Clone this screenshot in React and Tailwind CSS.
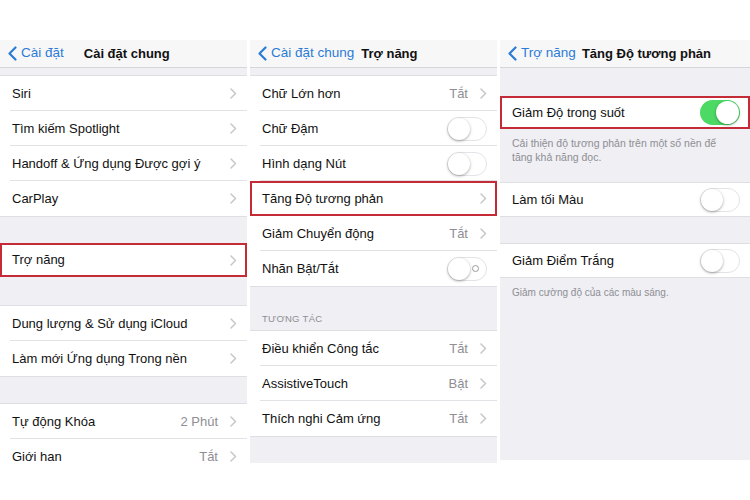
import React from "react";

const font = { fontFamily: '"Liberation Sans", Arial, sans-serif' };

function Chevron() {
  return (
    <svg width="7" height="11" viewBox="0 0 7 11" className="shrink-0">
      <polyline points="1,1 5.5,5.5 1,10" fill="none" stroke="#c7c7cc" strokeWidth="1.5" strokeLinecap="round" strokeLinejoin="round" />
    </svg>
  );
}

function BackChevron() {
  return (
    <svg width="9" height="15" viewBox="0 0 9 15" className="shrink-0">
      <polyline points="7.5,1.5 1.5,7.5 7.5,13.5" fill="none" stroke="#2b7bd6" strokeWidth="2.2" strokeLinecap="round" strokeLinejoin="round" />
    </svg>
  );
}

function Toggle({ on, label }) {
  if (on) {
    return (
      <div className="w-[40px] h-[25px] rounded-full bg-[#4cd964] flex items-center justify-end pr-[1px]">
        <div className="w-[23px] h-[23px] rounded-full bg-white shadow-[0_1px_3px_rgba(0,0,0,0.35)]" />
      </div>
    );
  }
  return (
    <div className="w-[40px] h-[24px] rounded-full bg-white border border-[#e3e3e8] flex items-center justify-between">
      <div className="w-[22px] h-[22px] rounded-full bg-white shadow-[0_1px_3px_rgba(0,0,0,0.35)]" />
      {label ? <div className="w-[7px] h-[7px] rounded-full border border-[#9a9aa0] mr-[7px]" /> : null}
    </div>
  );
}

function Row({ text, value, chevron, toggle, on, label, last, highlight, h = 35 }) {
  return (
    <div className="relative bg-white shrink-0" style={{ height: h }}>
      <div className="flex items-center h-full pl-[12px] pr-[10px]">
        <span className="text-[13px] text-[#111] flex-1 whitespace-nowrap">{text}</span>
        {value ? <span className="text-[13px] text-[#8e8e93] mr-[12px]">{value}</span> : null}
        {chevron ? <Chevron /> : null}
        {toggle ? <Toggle on={on} label={label} /> : null}
      </div>
      {!last ? <div className="absolute bottom-0 left-[10px] right-0 h-px bg-[#e2e2e6]" /> : null}
      {highlight ? <div className="absolute inset-0 border-2 border-[#c42b37]" /> : null}
    </div>
  );
}

function Group({ children }) {
  return <div className="border-y border-[#dedee3] bg-white shrink-0">{children}</div>;
}

function Nav({ back, title, gap }) {
  return (
    <div className="h-[28px] bg-[#f7f7f8] border-b border-[#d6d6da] flex items-center pl-[8px] shrink-0">
      <BackChevron />
      <span className="ml-[4px] text-[13.5px] text-[#2b7bd6] whitespace-nowrap">{back}</span>
      <span className="text-[13px] font-bold text-[#111] whitespace-nowrap" style={{ marginLeft: gap }}>{title}</span>
    </div>
  );
}

function Gap({ h, children }) {
  return <div className="bg-[#efeff4] shrink-0" style={{ height: h }}>{children}</div>;
}

export default function App() {
  return (
    <div className="w-[750px] h-[500px] bg-white flex gap-[3px] pt-[40px] overflow-hidden" style={font}>
      {/* Panel 1 */}
      <div className="w-[247px] flex flex-col overflow-hidden">
        <Nav back="Cài đặt" title="Cài đặt chung" gap={20} />
        <Gap h={7} />
        <Group>
          <Row text="Siri" chevron />
          <Row text="Tìm kiếm Spotlight" chevron />
          <Row text="Handoff & Ứng dụng Được gợi ý" chevron />
          <Row text="CarPlay" chevron last />
        </Group>
        <Gap h={26} />
        <Row text="Trợ năng" chevron last highlight h={34} />
        <Gap h={28} />
        <Group>
          <Row text="Dung lượng & Sử dụng iCloud" chevron />
          <Row text="Làm mới Ứng dụng Trong nền" chevron last />
        </Group>
        <Gap h={26} />
        <div className="border-t border-[#dedee3] bg-white shrink-0">
          <Row text="Tự động Khóa" value="2 Phút" chevron />
          <Row text="Giới han" value="Tắt" chevron last />
        </div>
      </div>

      {/* Panel 2 */}
      <div className="w-[247px] flex flex-col overflow-hidden">
        <Nav back="Cài đặt chung" title="Trợ năng" gap={7} />
        <Gap h={7} />
        <Group>
          <Row text="Chữ Lớn hơn" value="Tắt" chevron />
          <Row text="Chữ Đậm" toggle />
          <Row text="Hình dạng Nút" toggle />
          <Row text="Tăng Độ tương phản" chevron highlight />
          <Row text="Giảm Chuyển động" value="Tắt" chevron />
          <Row text="Nhãn Bật/Tắt" toggle label last />
        </Group>
        <Gap h={43}>
          <div className="pt-[25px] pl-[12px] text-[9.5px] text-[#8e8e93] tracking-[0.3px]">TƯƠNG TÁC</div>
        </Gap>
        <Group>
          <Row text="Điều khiển Công tắc" value="Tắt" chevron />
          <Row text="AssistiveTouch" value="Bật" chevron />
          <Row text="Thích nghi Cảm ứng" value="Tắt" chevron last />
        </Group>
        <Gap h={26} />
      </div>

      {/* Panel 3 */}
      <div className="flex-1 flex flex-col overflow-hidden">
        <Nav back="Trợ năng" title="Tăng Độ tương phản" gap={6} />
        <Gap h={28} />
        <Row text="Giảm Độ trong suốt" toggle on last highlight h={33} />
        <Gap h={53}>
          <div className="pt-[7px] pl-[12px] w-[228px] text-[10.5px] leading-[14px] text-[#8e8e93]">
            Cải thiện độ tương phản trên một số nền để tăng khả năng đọc.
          </div>
        </Gap>
        <Group>
          <Row text="Làm tối Màu" toggle last h={33} />
        </Group>
        <Gap h={26} />
        <Group>
          <Row text="Giảm Điểm Trắng" toggle last h={33} />
        </Group>
        <Gap h={182}>
          <div className="pt-[7px] pl-[12px] text-[10px] text-[#8e8e93]">Giảm cường độ của các màu sáng.</div>
        </Gap>
      </div>
    </div>
  );
}
